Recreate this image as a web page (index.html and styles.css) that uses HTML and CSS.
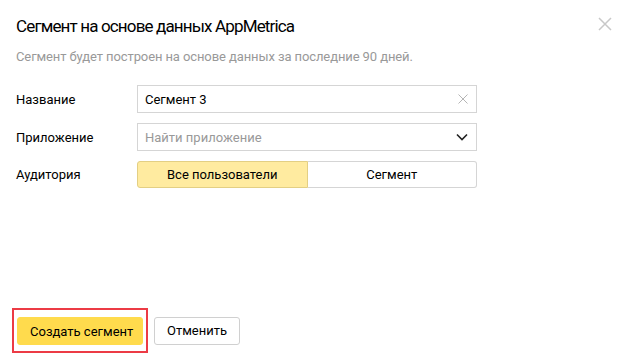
FILE: index.html
```html
<!DOCTYPE html>
<html lang="ru">
  <head>
    <meta charset="UTF-8" />
    <title>Сегмент на основе данных AppMetrica</title>
    <link rel="stylesheet" href="styles.css">
  </head>
  <body>
    <div class="modal">
      <div class="modal-head">
        <h2>Сегмент на основе данных AppMetrica</h2>
        <span class="close">
          <svg width="14" height="14" viewBox="0 0 14 14"><path d="M1 1L13 13M13 1L1 13" stroke="#c8c8c8" stroke-width="1.5" fill="none"/></svg>
        </span>
      </div>
      <p class="hint">Сегмент будет построен на основе данных за последние 90 дней.</p>

      <div class="form">
        <div class="row">
          <label>Название</label>
          <div class="field">
            <span class="value">Сегмент 3</span>
            <svg width="10" height="10" viewBox="0 0 10 10"><path d="M0.5 0.5L9.5 9.5M9.5 0.5L0.5 9.5" stroke="#b5b5b5" stroke-width="1" fill="none"/></svg>
          </div>
        </div>
        <div class="row">
          <label>Приложение</label>
          <div class="field">
            <span class="placeholder">Найти приложение</span>
            <svg width="12" height="8" viewBox="0 0 12 8"><path d="M1 1.5L6 6.5L11 1.5" stroke="#222" stroke-width="1.6" fill="none"/></svg>
          </div>
        </div>
        <div class="row">
          <label>Аудитория</label>
          <div class="switch">
            <button class="opt active">Все пользователи</button>
            <button class="opt">Сегмент</button>
          </div>
        </div>
      </div>

      <div class="actions">
        <div class="highlight">
          <button class="btn primary">Создать сегмент</button>
        </div>
        <button class="btn">Отменить</button>
      </div>
    </div>
  </body>
</html>
```

FILE: styles.css
```css
body {
  margin: 0;
  font-family: Roboto, "Liberation Sans", sans-serif;
  color: #000;
  background: #fff;
}

.modal {
  width: 626px;
  height: 355px;
  padding: 0 16px;
  box-sizing: border-box;
  display: flex;
  flex-direction: column;
}

.modal-head {
  display: flex;
  justify-content: space-between;
  align-items: flex-start;
}

.modal-head h2 {
  margin: 14px 0 0;
  font-size: 17px;
  font-weight: 400;
  line-height: 24px;
  letter-spacing: -0.85px;
}

.close {
  margin: 17px -2px 0 0;
  display: flex;
}

.hint {
  margin: 11px 0 0;
  font-size: 13px;
  line-height: 16px;
  color: #999;
  letter-spacing: -0.1px;
}

.form {
  margin-top: 20px;
  display: flex;
  flex-direction: column;
  gap: 10px;
}

.row {
  display: flex;
  align-items: center;
  font-size: 13px;
}

.row label {
  width: 121px;
}

.field {
  width: 340px;
  height: 28px;
  box-sizing: border-box;
  border: 1px solid #d5d5d5;
  display: flex;
  align-items: center;
  justify-content: space-between;
  padding: 0 8px 0 7px;
}

.placeholder {
  color: #999;
}

.switch {
  width: 340px;
  height: 27px;
  display: flex;
}

.opt {
  flex: 1;
  margin: 0;
  font: inherit;
  font-size: 13px;
  background: #fff;
  border: 1px solid #d5d5d5;
  color: #000;
}

.opt:first-child {
  border-radius: 3px 0 0 3px;
}

.opt:last-child {
  border-left: none;
  border-radius: 0 3px 3px 0;
}

.opt.active {
  background: #ffeba0;
  border-color: #e3cf84;
}

.actions {
  margin-top: auto;
  margin-bottom: 2px;
  margin-left: -4px;
  display: flex;
  align-items: center;
  gap: 6px;
}

.highlight {
  border: 2px solid #ec3b45;
  padding: 7px 3px 6px;
  display: flex;
}

.btn {
  height: 28px;
  padding: 0 12px;
  font: inherit;
  font-size: 13px;
  white-space: nowrap;
  background: #fff;
  border: 1px solid #d0d0d0;
  border-radius: 3px;
  color: #000;
}

.btn.primary {
  width: 126px;
  background: #ffdb4d;
  border-color: #ffdb4d;
}
```
